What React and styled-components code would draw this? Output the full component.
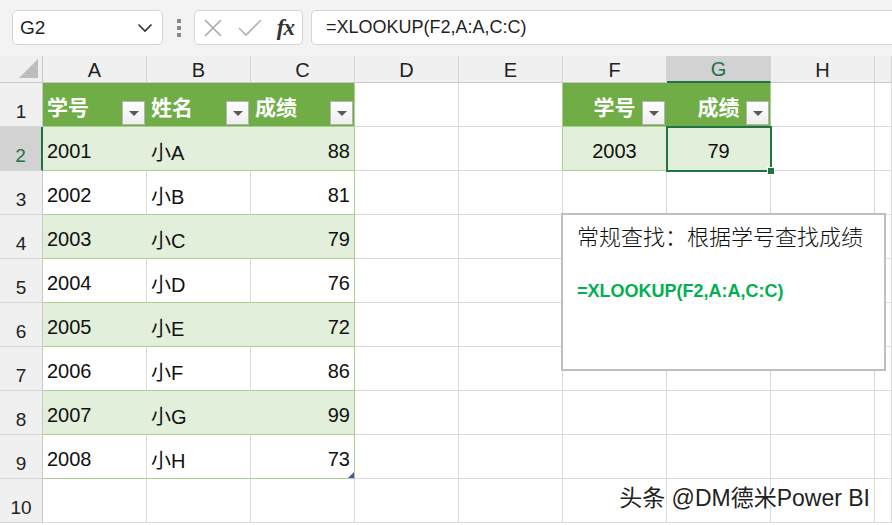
import React from 'react';
import styled, { createGlobalStyle, css } from 'styled-components';

const GREEN = '#70ad47';
const BAND = '#e2efda';
const TBORDER = '#a9d08e';
const GRID = '#dadada';
const SEL = '#217346';
const HEAD_BG = '#f0f0f0';

const GlobalStyle = createGlobalStyle`
  html, body {
    margin: 0;
    padding: 0;
    background: #fff;
  }
  body {
    font-family: "Liberation Sans", "Noto Sans CJK SC", sans-serif;
    overflow: hidden;
  }
`;

const Page = styled.div`
  position: relative;
  width: 892px;
  height: 525px;
  overflow: hidden;
  background: #fff;
`;

/* ---------- formula bar ---------- */

const FormulaBar = styled.div`
  box-sizing: border-box;
  height: 56px;
  padding: 10px 0 0 12px;
  display: flex;
  align-items: flex-start;
  background: #f3f3f3;
`;

const BarBox = styled.div`
  box-sizing: border-box;
  height: 35px;
  background: #fff;
  border: 1px solid #d4d4d4;
  border-radius: 5px;
  display: flex;
  align-items: center;
`;

const NameBox = styled(BarBox)`
  width: 151px;
  padding: 0 9px 0 7px;
  justify-content: space-between;
  font-size: 19px;
  color: #1f1f1f;
`;

const Grip = styled.div`
  width: 31px;
  height: 35px;
  display: flex;
  flex-direction: column;
  align-items: center;
  justify-content: center;
  gap: 3px;

  span {
    width: 4px;
    height: 4px;
    background: #8a8a8a;
  }
`;

const FxBox = styled(BarBox)`
  width: 109px;
  padding: 0 6px 0 8px;
  justify-content: space-between;
`;

const Fx = styled.span`
  font-family: "Liberation Serif", serif;
  font-style: italic;
  font-weight: 700;
  font-size: 23px;
  color: #333;
  letter-spacing: -1px;
  padding-right: 2px;
`;

const FormulaInput = styled(BarBox)`
  flex: 1;
  margin-left: 8px;
  padding-left: 14px;
  border-right: none;
  border-radius: 5px 0 0 5px;
  font-size: 18px;
  color: #1f1f1f;
`;

/* ---------- sheet ---------- */

const Sheet = styled.div`
  display: grid;
  grid-template-columns: 43px repeat(8, 104px) 1fr;
  grid-template-rows: 27px repeat(10, 44px);
`;

const Corner = styled.div`
  position: relative;
  box-sizing: border-box;
  background: ${HEAD_BG};
  border-right: 1px solid #c8c8c8;
  border-bottom: 1px solid #c8c8c8;

  &::after {
    content: '';
    position: absolute;
    right: 4px;
    bottom: 4px;
    width: 0;
    height: 0;
    border-left: 19px solid transparent;
    border-bottom: 19px solid #bdbdbd;
  }
`;

const ColHead = styled.div`
  box-sizing: border-box;
  display: flex;
  align-items: center;
  justify-content: center;
  padding-top: 2px;
  font-size: 20px;
  color: ${p => (p.$active ? SEL : '#222')};
  background: ${p => (p.$active ? '#d2d2d2' : HEAD_BG)};
  border-right: 1px solid #d4d4d4;
  border-bottom: ${p => (p.$active ? `2px solid ${SEL}` : '1px solid #c8c8c8')};
`;

const RowHead = styled.div`
  box-sizing: border-box;
  display: flex;
  align-items: flex-end;
  justify-content: center;
  padding-bottom: 3px;
  font-size: 19px;
  color: ${p => (p.$active ? SEL : '#222')};
  background: ${p => (p.$active ? '#d2d2d2' : HEAD_BG)};
  border-bottom: 1px solid #d4d4d4;
  border-right: ${p => (p.$active ? `2px solid ${SEL}` : '1px solid #c8c8c8')};
`;

const Cell = styled.div`
  position: relative;
  box-sizing: border-box;
  display: flex;
  align-items: center;
  justify-content: ${p =>
    p.$align === 'right' ? 'flex-end' : p.$align === 'center' ? 'center' : 'flex-start'};
  padding: ${p => (p.$fill === 'head' ? '3px 4px 0 4px' : '6px 4px 0 4px')};
  font-size: ${p => (p.$fill === 'head' ? '21px' : '20px')};
  font-weight: ${p => (p.$fill === 'head' ? 700 : 400)};
  color: ${p => (p.$fill === 'head' ? '#fff' : '#111')};
  background: ${p => (p.$fill === 'head' ? GREEN : p.$fill === 'band' ? BAND : '#fff')};
  border-right: 1px solid ${p => p.$right || GRID};
  border-bottom: 1px solid ${p => p.$bottom || GRID};
  white-space: nowrap;

  ${p =>
    p.$selected &&
    css`
      z-index: 2;
      outline: 2px solid ${SEL};
      outline-offset: -1px;

      &::after {
        content: '';
        position: absolute;
        right: -5px;
        bottom: -5px;
        width: 6px;
        height: 6px;
        background: ${SEL};
        border: 1px solid #fff;
      }
    `}

  ${p =>
    p.$resize &&
    css`
      &::after {
        content: '';
        position: absolute;
        right: 0;
        bottom: 0;
        width: 0;
        height: 0;
        border-left: 6px solid transparent;
        border-bottom: 6px solid #3f58b5;
      }
    `}
`;

const FilterButton = styled.div`
  position: absolute;
  right: 1px;
  bottom: 1px;
  box-sizing: border-box;
  width: 23px;
  height: 24px;
  background: linear-gradient(#ffffff, #eeeeee);
  border: 1px solid #b4b4b4;
  display: flex;
  align-items: center;
  justify-content: center;

  &::before {
    content: '';
    width: 0;
    height: 0;
    border-left: 5px solid transparent;
    border-right: 5px solid transparent;
    border-top: 5px solid #595959;
  }
`;

/* ---------- floating text box ---------- */

const Note = styled.div`
  position: absolute;
  left: 561px;
  top: 213px;
  box-sizing: border-box;
  width: 325px;
  height: 158px;
  padding: 4px 14px;
  background: #fff;
  border: 2px solid #bfbfbf;
  z-index: 3;
`;

const NoteTitle = styled.div`
  font-family: "Noto Sans CJK SC", sans-serif;
  font-size: 22px;
  font-weight: 300;
  line-height: 32px;
  color: #111;
`;

const NoteFormula = styled.div`
  margin-top: 30px;
  font-size: 18px;
  font-weight: 700;
  color: #00b050;
`;

const Watermark = styled.div`
  position: absolute;
  right: 22px;
  bottom: 12px;
  font-family: "Liberation Sans", "Noto Sans CJK SC", sans-serif;
  font-size: 23px;
  color: #222;
  text-shadow: 0 0 2px #fff, 0 0 2px #fff, 1px 1px 1px #fff;
  z-index: 4;
`;

/* ---------- data ---------- */

const COLS = ['A', 'B', 'C', 'D', 'E', 'F', 'G', 'H', ''];

const students = [
  ['2001', '小A', 88],
  ['2002', '小B', 81],
  ['2003', '小C', 79],
  ['2004', '小D', 76],
  ['2005', '小E', 72],
  ['2006', '小F', 86],
  ['2007', '小G', 99],
  ['2008', '小H', 73],
];

const X = () => (
  <svg width="20" height="20" viewBox="0 0 20 20">
    <path d="M2 2 L18 18 M18 2 L2 18" stroke="#a8a8a8" strokeWidth="1.6" fill="none" />
  </svg>
);

const Check = () => (
  <svg width="24" height="20" viewBox="0 0 24 20">
    <path d="M1 10 L8 17 L23 2" stroke="#b4b4b4" strokeWidth="1.6" fill="none" />
  </svg>
);

const Chevron = () => (
  <svg width="16" height="10" viewBox="0 0 16 10">
    <path d="M1.5 1.5 L8 8 L14.5 1.5" stroke="#333" strokeWidth="1.6" fill="none" />
  </svg>
);

function cellsForRow(r) {
  const out = [];
  const band = r >= 2 && r <= 9 && r % 2 === 0;

  COLS.forEach((col, i) => {
    const key = `${r}-${i}`;
    // main table A1:C9
    if (i <= 2 && r <= 9) {
      const last = i === 2;
      if (r === 1) {
        out.push(
          <Cell key={key} $fill="head" $right={last ? TBORDER : GREEN} $bottom={TBORDER}>
            {['学号', '姓名', '成绩'][i]}
            <FilterButton />
          </Cell>
        );
      } else {
        const row = students[r - 2];
        out.push(
          <Cell
            key={key}
            $fill={band ? 'band' : undefined}
            $align={last ? 'right' : 'left'}
            $right={last ? TBORDER : band ? BAND : GRID}
            $bottom={TBORDER}
            $resize={last && r === 9}
          >
            {row[i]}
          </Cell>
        );
      }
      return;
    }
    // lookup table F1:G2
    if ((i === 5 || i === 6) && r <= 2) {
      if (r === 1) {
        out.push(
          <Cell key={key} $fill="head" $align="center" $right={i === 6 ? TBORDER : GREEN} $bottom={TBORDER}>
            {i === 5 ? '学号' : '成绩'}
            <FilterButton />
          </Cell>
        );
      } else {
        out.push(
          <Cell
            key={key}
            $fill="band"
            $align="center"
            $right={TBORDER}
            $bottom={TBORDER}
            $selected={i === 6}
          >
            {i === 5 ? '2003' : '79'}
          </Cell>
        );
      }
      return;
    }
    out.push(<Cell key={key} $right={i === 4 && r <= 2 ? TBORDER : GRID} />);
  });
  return out;
}

const App = () => {
  const rows = Array.from({ length: 10 }, (_, k) => k + 1);

  return (
    <Page>
      <GlobalStyle />
      <FormulaBar>
        <NameBox>
          <span>G2</span>
          <Chevron />
        </NameBox>
        <Grip>
          <span />
          <span />
          <span />
        </Grip>
        <FxBox>
          <X />
          <Check />
          <Fx>fx</Fx>
        </FxBox>
        <FormulaInput>=XLOOKUP(F2,A:A,C:C)</FormulaInput>
      </FormulaBar>

      <Sheet>
        <Corner />
        {COLS.map((c, i) => (
          <ColHead key={`h${i}`} $active={c === 'G'}>
            {c}
          </ColHead>
        ))}
        {rows.map(r => (
          <React.Fragment key={r}>
            <RowHead $active={r === 2}>{r}</RowHead>
            {cellsForRow(r)}
          </React.Fragment>
        ))}
      </Sheet>

      <Note>
        <NoteTitle>常规查找：根据学号查找成绩</NoteTitle>
        <NoteFormula>=XLOOKUP(F2,A:A,C:C)</NoteFormula>
      </Note>

      <Watermark>头条 @DM德米Power BI</Watermark>
    </Page>
  );
};

export default App;
